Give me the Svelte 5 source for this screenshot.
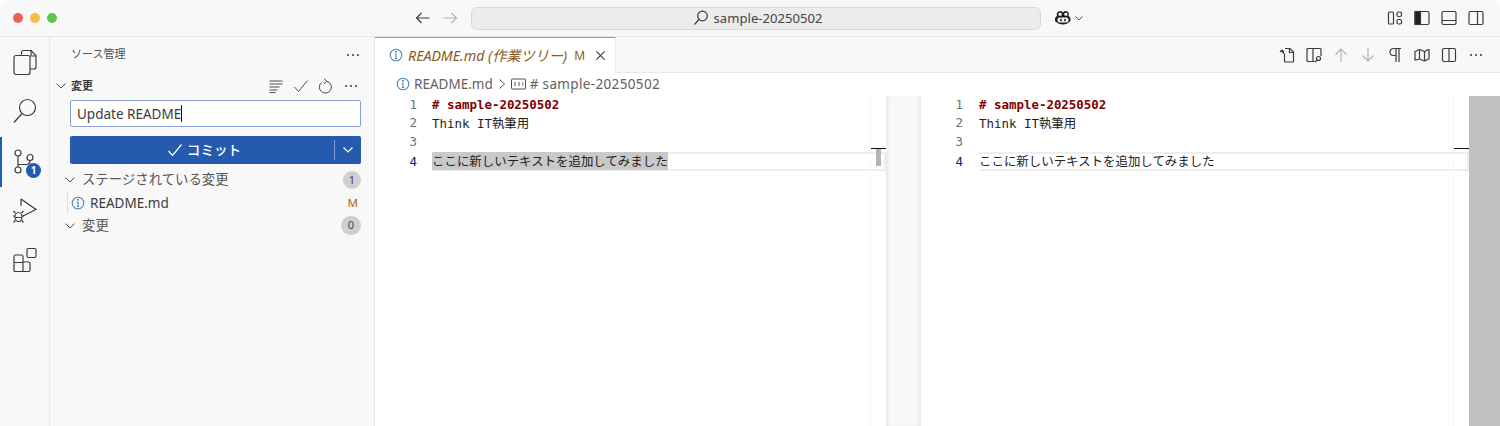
<script>
    const leftLines = [
        { n: 1, text: '# sample-20250502', heading: true },
        { n: 2, text: 'Think IT執筆用' },
        { n: 3, text: '' },
        { n: 4, text: 'ここに新しいテキストを追加してみました', active: true }
    ];
</script>

<div class="window">
    <header class="titlebar">
        <div class="lights">
            <span class="light red"></span>
            <span class="light yellow"></span>
            <span class="light green"></span>
        </div>
        <div class="nav">
            <svg width="18" height="18" viewBox="0 0 18 18" class="ico"><path d="M15.5 9H2.5M7.5 4L2.5 9l5 5" /></svg>
            <svg width="18" height="18" viewBox="0 0 18 18" class="ico faint"><path d="M2.5 9h13M10.500 4l5 5-5 5" /></svg>
        </div>
        <div class="command">
            <svg width="16" height="16" viewBox="0 0 16 16" class="ico"><circle cx="9.500" cy="6" r="4.800" /><path d="M6 9.500L1.500 14.500" /></svg>
            <span>sample-20250502</span>
        </div>
        <div class="copilot">
            <svg width="18" height="16" viewBox="0 0 18 16"><path d="M4.500 1.500c2-1 3.500-.5 4.500 1 1-1.500 2.500-2 4.500-1 1.500 1 1.500 3 1 4.500 1 .8 2 1.500 2 3v2c-2.500 2.500-5 3.500-7.500 3.500S3.500 13.500 1 11V9c0-1.500 1-2.200 2-3-.5-1.500-.5-3.500 1.500-4.500z" fill="#1c1c1c" /><rect x="4.500" y="2.800" width="3.200" height="3" rx="1.200" fill="#f8f8f8" /><rect x="10.300" y="2.800" width="3.200" height="3" rx="1.200" fill="#f8f8f8" /><rect x="3.500" y="7.500" width="11" height="5" rx="2" fill="#f8f8f8" /><rect x="6.200" y="8.800" width="1.500" height="2.500" fill="#1c1c1c" /><rect x="10.300" y="8.800" width="1.500" height="2.500" fill="#1c1c1c" /></svg>
            <svg width="10" height="10" viewBox="0 0 10 10" class="ico thin"><path d="M1.500 3.500L5 7l3.500-3.500" /></svg>
        </div>
        <div class="layout-icons">
            <svg width="16" height="16" viewBox="0 0 16 16" class="ico"><rect x="1.500" y="2" width="5" height="12" rx="1" /><rect x="10" y="2" width="4.500" height="4.500" rx="1.500" /><rect x="10" y="9.500" width="4.500" height="4.500" rx="1.500" /></svg>
            <svg width="16" height="16" viewBox="0 0 16 16" class="ico"><rect x="1" y="1.500" width="14" height="13" rx="1.500" /><rect x="1" y="1.500" width="5.500" height="13" fill="#222" /></svg>
            <svg width="16" height="16" viewBox="0 0 16 16" class="ico"><rect x="1" y="1.500" width="14" height="13" rx="1.500" /><path d="M1 10.500h14" /></svg>
            <svg width="16" height="16" viewBox="0 0 16 16" class="ico"><rect x="1" y="1.500" width="14" height="13" rx="1.500" /><path d="M9.500 1.500v13" /></svg>
        </div>
    </header>

    <div class="body">
        <nav class="activity">
            <div class="act">
                <svg width="26" height="28" viewBox="0 0 26 28" class="ico"><path d="M9.500 5.500V3.500a2 2 0 0 1 2-2h7.500l5 5v11.500a2 2 0 0 1-2 2H18" /><path d="M19 1.500V7h5" /><rect x="2" y="6.500" width="16" height="19" rx="2" /></svg>
            </div>
            <div class="act up">
                <svg width="26" height="28" viewBox="0 0 26 28" class="ico"><circle cx="15.500" cy="10.500" r="8" /><path d="M10 16.500L2 25.500" /></svg>
            </div>
            <div class="act current">
                <svg width="26" height="28" viewBox="0 0 26 28" class="ico"><circle cx="6" cy="5" r="3" /><circle cx="6" cy="22" r="3" /><circle cx="18" cy="9.500" r="3" /><path d="M6 8v11M6 16.500h8c3 0 4-2 4-4" /></svg>
                <span class="act-badge">1</span>
            </div>
            <div class="act">
                <svg width="26" height="28" viewBox="0 0 26 28" class="ico"><path d="M9 2l15 10.500L11 19M9 2v7" /><ellipse cx="6.500" cy="20" rx="3.500" ry="4.500" /><path d="M3 19H1M10 19h2M3.500 23.500l-2 2M9.500 23.500l2 2M3.500 16l-2-2M9.500 16l2-2M3.500 20.500h6" /></svg>
            </div>
            <div class="act">
                <svg width="26" height="28" viewBox="0 0 26 28" class="ico"><rect x="15" y="1.500" width="9" height="9" rx="1.500" /><path d="M2 9.500a1.500 1.500 0 0 1 1.500-1.500h6a1.500 1.500 0 0 1 1.500 1.500V15h5.500a1.500 1.500 0 0 1 1.500 1.500v6.500a1.500 1.500 0 0 1-1.500 1.500h-14A1.500 1.500 0 0 1 2 23z" /><path d="M2 15.500h9v9" /></svg>
            </div>
        </nav>

        <aside class="sidebar">
            <div class="side-head">
                <span class="cjk">ソース管理</span>
                <span class="dots"><i></i><i></i><i></i></span>
            </div>
            <div class="repo-head">
                <svg width="12" height="12" viewBox="0 0 12 12" class="ico thin"><path d="M1.500 3.500L6 8l4.500-4.500" /></svg>
                <b class="cjk">変更</b>
                <div class="repo-actions">
                    <svg width="16" height="16" viewBox="0 0 16 16" class="ico thin"><path d="M1.500 3h13M1.500 6h13M1.500 9h10M1.500 12h8M1.500 14.500h6" /></svg>
                    <svg width="16" height="16" viewBox="0 0 16 16" class="ico thin"><path d="M1.500 9l4 4.500L14.500 2.500" /></svg>
                    <svg width="16" height="16" viewBox="0 0 16 16" class="ico thin"><path d="M6 .8l2.800 2.400L6 5.800M8.500 3.200A6 6 0 1 1 3.500 4.500" /></svg>
                    <span class="dots"><i></i><i></i><i></i></span>
                </div>
            </div>
            <div class="message">Update README<span class="caret"></span></div>
            <div class="commit">
                <div class="commit-main">
                    <svg width="16" height="16" viewBox="0 0 16 16" class="ico white"><path d="M1.500 9l4 4.500L14.500 2.500" /></svg>
                    <span class="cjk">コミット</span>
                </div>
                <span class="commit-sep"></span>
                <div class="commit-drop">
                    <svg width="12" height="12" viewBox="0 0 12 12" class="ico white"><path d="M1.500 3.500L6 8l4.500-4.500" /></svg>
                </div>
            </div>
            <div class="groups">
                <div class="group">
                    <svg width="12" height="12" viewBox="0 0 12 12" class="ico thin"><path d="M1.500 3.500L6 8l4.500-4.500" /></svg>
                    <span class="cjk">ステージされている変更</span>
                    <span class="count">1</span>
                </div>
                <div class="file">
                    <svg width="14" height="14" viewBox="0 0 14 14" class="info"><circle cx="7" cy="7" r="5.800" /><path d="M7 6v4.500M5.800 10.500h2.400M5.800 6H7" /><circle cx="7" cy="3.800" r=".5" /></svg>
                    <span>README.md</span>
                    <span class="mod">M</span>
                </div>
                <div class="group">
                    <svg width="12" height="12" viewBox="0 0 12 12" class="ico thin"><path d="M1.500 3.500L6 8l4.500-4.500" /></svg>
                    <span class="cjk">変更</span>
                    <span class="count wide">0</span>
                </div>
            </div>
        </aside>

        <main class="main">
            <div class="tabs">
                <div class="tab">
                    <svg width="14" height="14" viewBox="0 0 14 14" class="info"><circle cx="7" cy="7" r="5.800" /><path d="M7 6v4.500M5.800 10.500h2.400M5.800 6H7" /><circle cx="7" cy="3.800" r=".5" /></svg>
                    <em>README.md (作業ツリー)</em>
                    <span class="tab-m">M</span>
                    <svg width="11" height="11" viewBox="0 0 12 12" class="ico"><path d="M1.500 1.500l9 9M10.500 1.500l-9 9" /></svg>
                </div>
                <div class="tab-actions">
                    <svg width="16" height="16" viewBox="0 0 16 16" class="ico"><path d="M6 1.500h5l3.500 3.500v9a1 1 0 0 1-1 1H6.500a1 1 0 0 1-1-1V7" /><path d="M10.500 1.500V5.500h4" /><path d="M1 5l2-2 2 2M3 3c0 2 .5 3 2.500 3.500" /></svg>
                    <svg width="16" height="16" viewBox="0 0 16 16" class="ico"><path d="M8.500 14.500H2a1 1 0 0 1-1-1v-11a1 1 0 0 1 1-1h12a1 1 0 0 1 1 1v6.500" /><path d="M7 1.500V14.500" /><circle cx="12.500" cy="11.500" r="2" /><path d="M11 13l-2 2" /></svg>
                    <svg width="16" height="16" viewBox="0 0 16 16" class="ico faint"><path d="M8 15V2M2.500 7.500L8 2l5.500 5.500" /></svg>
                    <svg width="16" height="16" viewBox="0 0 16 16" class="ico faint"><path d="M8 1v13M2.500 8.500L8 14l5.500-5.500" /></svg>
                    <svg width="16" height="16" viewBox="0 0 16 16" class="ico"><path d="M14 1.500H6.500a3.500 3.500 0 0 0 0 7H9V15M12 1.500V15M9 1.500v7" /></svg>
                    <svg width="16" height="16" viewBox="0 0 16 16" class="ico"><path d="M1 4.500c1.500 0 3-2 4.500-2s3.500 2 5 2 2.500-2 4.500-2v9.500c-2 0-3 2-4.500 2s-3.500-2-5-2S2.500 13 1 13zM5.500 2.500v9M10.500 4.500v9.500" /></svg>
                    <svg width="16" height="16" viewBox="0 0 16 16" class="ico"><rect x="1.500" y="1.500" width="13" height="13" rx="1.500" /><path d="M8 1.500v13" /></svg>
                    <span class="dots"><i></i><i></i><i></i></span>
                </div>
            </div>

            <div class="crumbs">
                <svg width="14" height="14" viewBox="0 0 14 14" class="info"><circle cx="7" cy="7" r="5.800" /><path d="M7 6v4.500M5.800 10.500h2.400M5.800 6H7" /><circle cx="7" cy="3.800" r=".5" /></svg>
                <span>README.md</span>
                <svg width="10" height="12" viewBox="0 0 10 12" class="ico thin"><path d="M2.500 1.500L7.500 6l-5 4.500" /></svg>
                <svg width="15" height="12" viewBox="0 0 15 12" class="ico thin"><rect x=".5" y="1" width="14" height="10" rx="1" /><path d="M3 5h2M3 7h2M7 5h2M7 7h2M11 5h1.500M11 7h1.500" /></svg>
                <span class="symbol"># sample-20250502</span>
            </div>

            <div class="diff">
                <section class="pane left">
                    <div class="lines">
                        {#each leftLines as line}
                            <div class="line" class:active={line.active}>
                                <span class="num">{line.n}</span>
                                <div class="content"><span class="code" class:heading={line.heading} class:selected={line.active}>{line.text}</span></div>
                            </div>
                        {/each}
                    </div>
                    <div class="ruler">
                        <span class="ruler-mark"></span>
                        <span class="ruler-thumb"></span>
                    </div>
                </section>
                <div class="split"></div>
                <section class="pane right">
                    <div class="lines">
                        {#each leftLines as line}
                            <div class="line" class:active={line.active}>
                                <span class="num">{line.n}</span>
                                <div class="content"><span class="code" class:heading={line.heading}>{line.text}</span></div>
                            </div>
                        {/each}
                    </div>
                    <div class="ruler">
                        <span class="ruler-mark"></span>
                    </div>
                </section>
                <div class="scroll"></div>
            </div>
        </main>
    </div>
</div>

<style>
    :global(body) {
        background: #fff;
    }

    .window {
        height: 426px;
        display: flex;
        flex-direction: column;
        overflow: hidden;
        background: #f8f8f8;
        border-radius: 10px 10px 0 0;
        font-family: "Noto Sans", "Noto Sans CJK JP", sans-serif;
        color: #3b3b3b;
    }

    /* Noto CJK sits low in its line box */
    .cjk {
        margin-top: -3px;
    }

    .ico {
        fill: none;
        stroke: #3b3b3b;
        stroke-width: 1.2;
        display: block;
        flex: none;
    }
    .ico.faint { stroke: #b4b4b4; }
    .ico.thin { stroke-width: 0.9; }
    .ico.white { stroke: #fff; }

    .info {
        fill: none;
        stroke: #4a87b5;
        stroke-width: 1.100;
        flex: none;
    }

    .titlebar {
        height: 36px;
        flex: none;
        display: flex;
        align-items: center;
        border-bottom: 1px solid #e8e8e8;
        background: #f8f8f8;
    }

    .lights {
        display: flex;
        gap: 7px;
        margin-left: 13px;
        width: 401px;
    }
    .light {
        width: 10px;
        height: 10px;
        border-radius: 50%;
    }
    .red { background: #f0605a; }
    .yellow { background: #f6bd3f; }
    .green { background: #5fc44c; }

    .nav {
        display: flex;
        gap: 9px;
    }

    .command {
        width: 570px;
        height: 23px;
        margin-left: 12px;
        padding-left: 3px;
        box-sizing: border-box;
        background: #ececec;
        border: 1px solid #d8d8d8;
        border-radius: 6px;
        display: flex;
        align-items: center;
        justify-content: center;
        gap: 5px;
        font-size: 13.100px;
        color: #444;
    }

    .copilot {
        display: flex;
        align-items: center;
        gap: 2px;
        margin-left: 13px;
    }

    .layout-icons {
        margin-left: auto;
        margin-right: 16px;
        display: flex;
        gap: 11px;
    }

    .body {
        flex: 1;
        min-height: 0;
        display: flex;
    }

    .activity {
        width: 49px;
        flex: none;
        border-right: 1px solid #e8e8e8;
        display: flex;
        flex-direction: column;
        padding-top: 1px;
    }
    .act {
        height: 49.500px;
        position: relative;
        display: flex;
        align-items: center;
        justify-content: center;
        box-sizing: border-box;
    }
    .act.up svg {
        margin-top: -3px;
    }
    .act.current {
        box-shadow: inset 2px 0 0 #1f5bb5;
    }
    .act-badge {
        position: absolute;
        left: 26px;
        top: 26px;
        width: 15px;
        height: 15px;
        border-radius: 50%;
        background: #1f5bb5;
        color: #fff;
        font-size: 10px;
        font-weight: 700;
        line-height: 15px;
        text-align: center;
    }

    .sidebar {
        width: 325px;
        flex: none;
        box-sizing: border-box;
        border-right: 1px solid #e8e8e8;
        padding-right: 13px;
    }

    .side-head {
        height: 35px;
        display: flex;
        align-items: center;
        justify-content: space-between;
        padding-left: 21px;
        font-size: 11px;
        color: #555;
    }

    .dots {
        display: flex;
        gap: 3px;
        width: 16px;
        justify-content: center;
    }
    .dots i {
        width: 2px;
        height: 2px;
        border-radius: 50%;
        background: #3b3b3b;
    }

    .repo-head {
        height: 28px;
        display: flex;
        align-items: center;
        gap: 4px;
        padding-left: 5px;
        font-size: 11px;
        color: #3b3b3b;
    }
    .repo-actions {
        margin-left: auto;
        margin-right: 2px;
        display: flex;
        align-items: center;
        gap: 9px;
    }

    .message {
        height: 27px;
        margin-left: 20px;
        box-sizing: border-box;
        background: #fff;
        border: 1px solid #8c9fd0;
        border-radius: 2px;
        display: flex;
        align-items: center;
        padding-left: 6px;
        font-size: 13.500px;
        color: #3b3b3b;
    }
    .caret {
        width: 1px;
        height: 17px;
        background: #111;
    }

    .commit {
        height: 28px;
        margin-top: 9px;
        margin-left: 20px;
        background: #255baf;
        border-radius: 2px;
        display: flex;
        align-items: center;
        color: #fff;
    }
    .commit-main {
        flex: 1;
        display: flex;
        align-items: center;
        justify-content: center;
        gap: 4px;
        padding-left: 4px;
        font-size: 13.600px;
        font-weight: 500;
    }
    .commit-sep {
        width: 1px;
        height: 20px;
        background: #7d9bd0;
    }
    .commit-drop {
        width: 26px;
        display: flex;
        justify-content: center;
    }

    .groups {
        margin-top: 4px;
    }

    .group {
        height: 23px;
        display: flex;
        align-items: center;
        gap: 6px;
        padding-left: 14px;
        font-size: 13.400px;
        color: #555;
    }
    .count {
        margin-left: auto;
        width: 18px;
        height: 18px;
        border-radius: 50%;
        background: #cfcfcf;
        font-size: 11px;
        line-height: 18px;
        text-align: center;
        color: #444;
    }
    .count.wide { width: 20px; height: 19px; border-radius: 10px; }

    .file {
        height: 23px;
        margin-left: 17px;
        padding-left: 3px;
        border-left: 1px solid #ddd;
        display: flex;
        align-items: center;
        gap: 5px;
        font-size: 13.500px;
        color: #3b3b3b;
    }
    .mod {
        margin-left: auto;
        margin-right: 3px;
        font-size: 11.500px;
        font-weight: 500;
        color: #a9772b;
    }

    .main {
        flex: 1;
        min-width: 0;
        display: flex;
        flex-direction: column;
    }

    .tabs {
        height: 36px;
        flex: none;
        box-sizing: border-box;
        display: flex;
        align-items: center;
        border-bottom: 1px solid #e8e8e8;
    }
    .tab {
        width: 241px;
        height: 36px;
        box-sizing: border-box;
        display: flex;
        align-items: center;
        gap: 5px;
        padding-left: 14px;
        background: #fff;
        border-top: 1px solid #7f9bd0;
        border-right: 1px solid #e8e8e8;
        font-size: 14.200px;
    }
    .tab em {
        color: #8a5a1c;
    }
    .tab-m {
        color: #8a5a1c;
        font-size: 12px;
        margin-left: 2px;
        margin-right: 5px;
    }
    .tab-actions {
        margin-left: auto;
        margin-right: 16px;
        display: flex;
        align-items: center;
        gap: 11px;
    }

    .crumbs {
        height: 23px;
        flex: none;
        box-sizing: border-box;
        display: flex;
        align-items: center;
        gap: 4px;
        padding: 0 0 2px 21px;
        background: #fff;
        font-size: 13.500px;
        color: #616161;
    }
    .symbol {
        letter-spacing: 0.35px;
    }

    .diff {
        flex: 1;
        min-height: 0;
        display: flex;
        background: #fff;
    }

    .pane {
        position: relative;
        flex: none;
        overflow: hidden;
    }
    .pane.left { width: 511px; }
    .pane.right { width: 548px; }

    .split {
        width: 35px;
        flex: none;
        background: #f8f8f8;
        box-shadow: inset 4px 0 4px -3px #e0e0e0, inset -4px 0 4px -3px #e0e0e0;
    }

    .scroll {
        flex: 1;
        background: #c0c0c0;
    }

    .lines {
        margin-top: -1px;
        font-family: "DejaVu Sans Mono", "Noto Sans CJK JP", monospace;
        font-size: 12.450px;
    }

    .line {
        height: 18.670px;
        display: flex;
        align-items: center;
        white-space: pre;
        color: #222;
    }
    .line.active {
        margin-top: 1px;
    }
    .num {
        width: 42px;
        flex: none;
        text-align: right;
        margin-right: 15px;
        color: #6e6e6e;
    }
    .pane.right .num {
        margin-right: 16px;
    }
    .active .num {
        color: #0b216f;
    }
    .content {
        flex: 1;
        min-width: 0;
        height: 100%;
        display: flex;
        align-items: center;
        box-sizing: border-box;
    }
    .active .content {
        border: 2px solid #eee;
        border-left: none;
    }
    .heading {
        color: #800000;
        font-weight: 700;
    }
    .selected {
        background: #c9c9c9;
    }

    .ruler {
        position: absolute;
        top: 0;
        right: 0;
        bottom: 0;
        width: 15px;
        border-left: 1px solid #f7f7f7;
    }
    .ruler-mark {
        position: absolute;
        left: 0;
        right: 0;
        top: 52px;
        height: 1px;
        background: #111;
    }
    .ruler-thumb {
        position: absolute;
        left: 5px;
        width: 5px;
        top: 53px;
        height: 17px;
        background: #b4b4b4;
    }
</style>
